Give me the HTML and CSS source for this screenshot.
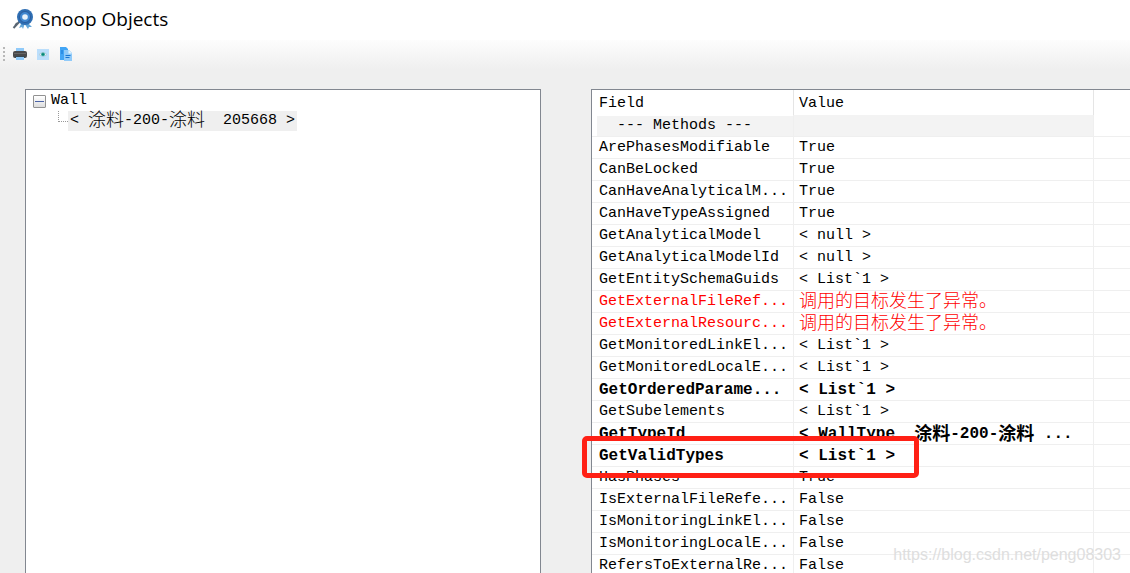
FILE: index.html
```html
<!DOCTYPE html>
<html lang="zh-CN">
<head>
<meta charset="utf-8">
<title>Snoop Objects</title>
<link rel="stylesheet" href="styles.css">
</head>
<body>
<header class="titlebar">
  <svg class="logo" viewBox="0 0 22 22" aria-hidden="true">
    <path d="M8 13 1.500 20M5 15l-2 3" stroke="#596673" stroke-width="2" fill="none"/>
    <path d="m10 14-3 6 3-1 1 2 2-6zm5 0 5 5-3 0-1 2-4-6z" fill="#62a5d8"/>
    <circle cx="13" cy="9" r="8" fill="#2e6eb3"/>
    <circle cx="13" cy="9" r="5.500" fill="#3f87d0" stroke="#2a5c9c"/>
    <circle cx="13" cy="9" r="2.800" fill="#e6f1fa"/>
  </svg>
  <h1 class="title">Snoop Objects</h1>
</header>
<nav class="toolbar" aria-label="Tools">
  <span class="grip"></span>
  <button class="tool" type="button" aria-label="Print">
    <svg viewBox="0 0 14 14"><path d="M3 1h8v4H3z" fill="#90caf9"/><rect y="4" width="14" height="7" rx="2" fill="#4a4a4a"/><path d="M1 6h12v1H1z" fill="#666"/><path d="M3 9h8v4H3z" fill="#90caf9"/><path d="M2 9h10v1H2z" fill="#37474f"/></svg>
  </button>
  <button class="tool" type="button" aria-label="Preview">
    <svg viewBox="0 0 14 14"><path d="M1 2h12v11H1z" fill="#bbdefb"/><path d="M3 7.500Q7 3.500 11 7.500 7 11 3 7.500" fill="#eceff1" stroke="#a2bdc9" stroke-width=".6"/><circle cx="7" cy="7.300" r="1.900" fill="#26a69a"/><circle cx="7" cy="7.300" r=".8" fill="#00695c"/></svg>
  </button>
  <button class="tool" type="button" aria-label="Copy">
    <svg viewBox="0 0 14 14"><path d="M1 0h6l2 2v11H1z" fill="#42a5f5"/><path d="M2 4h2M2 6h2" stroke="#1976d2"/><path d="M5 3h5l3 3v8H5z" fill="#90caf9"/><path d="M9.500 3 13 6.500H9.500z" fill="#e1f5fe"/><path d="M6.500 8.500h5M6.500 10.500h4" stroke="#1976d2"/></svg>
  </button>
</nav>
<main class="content">
  <section class="panel tree" aria-label="Objects">
    <div class="node">
      <button class="expander" type="button" aria-label="Collapse Wall"></button>
      <span>Wall</span>
    </div>
    <div class="child">
      <span class="branch"></span>
      <span class="selected">&lt; <span class="han">涂料</span>-200-<span class="han">涂料</span>  205668 &gt;</span>
    </div>
  </section>
  <section class="panel details" aria-label="Properties">
    <table class="grid">
      <colgroup><col class="col-field"><col class="col-value"><col></colgroup>
      <thead><tr><th>Field</th><th>Value</th><th></th></tr></thead>
      <tbody>
        <tr class="group"><td><span class="fill">  --- Methods ---</span></td><td></td><td></td></tr>
        <tr><td>ArePhasesModifiable</td><td>True</td><td></td></tr>
        <tr><td>CanBeLocked</td><td>True</td><td></td></tr>
        <tr><td>CanHaveAnalyticalM...</td><td>True</td><td></td></tr>
        <tr><td>CanHaveTypeAssigned</td><td>True</td><td></td></tr>
        <tr><td>GetAnalyticalModel</td><td>&lt; null &gt;</td><td></td></tr>
        <tr><td>GetAnalyticalModelId</td><td>&lt; null &gt;</td><td></td></tr>
        <tr><td>GetEntitySchemaGuids</td><td>&lt; List`1 &gt;</td><td></td></tr>
        <tr class="error"><td>GetExternalFileRef...</td><td><span class="han">调用的目标发生了异常。</span></td><td></td></tr>
        <tr class="error"><td>GetExternalResourc...</td><td><span class="han">调用的目标发生了异常。</span></td><td></td></tr>
        <tr><td>GetMonitoredLinkEl...</td><td>&lt; List`1 &gt;</td><td></td></tr>
        <tr><td>GetMonitoredLocalE...</td><td>&lt; List`1 &gt;</td><td></td></tr>
        <tr class="strong"><td>GetOrderedParame...</td><td>&lt; List`1 &gt;</td><td></td></tr>
        <tr><td>GetSubelements</td><td>&lt; List`1 &gt;</td><td></td></tr>
        <tr class="strong"><td>GetTypeId</td><td>&lt; WallType  <span class="han">涂料</span>-200-<span class="han">涂料</span> ...</td><td></td></tr>
        <tr class="strong"><td>GetValidTypes</td><td>&lt; List`1 &gt;</td><td></td></tr>
        <tr><td>HasPhases</td><td>True</td><td></td></tr>
        <tr><td>IsExternalFileRefe...</td><td>False</td><td></td></tr>
        <tr><td>IsMonitoringLinkEl...</td><td>False</td><td></td></tr>
        <tr><td>IsMonitoringLocalE...</td><td>False</td><td></td></tr>
        <tr><td>RefersToExternalRe...</td><td>False</td><td></td></tr>
      </tbody>
    </table>
    <div class="highlight"></div>
  </section>
</main>
<div class="watermark">https://blog.csdn.net/peng08303</div>
</body>
</html>
```
FILE: styles.css
```css
* { box-sizing: border-box; }

body {
  position: relative;
  display: flex;
  flex-direction: column;
  height: 100vh;
  margin: 0;
  overflow: hidden;
  background: #efefef;
  color: #000;
  font: 15px/20px "Liberation Mono", "Noto Sans CJK SC", monospace;
}

.titlebar {
  display: flex;
  flex: none;
  align-items: center;
  gap: 6px;
  height: 40px;
  padding: 0 0 2px 12px;
  background: #fff;
}

.logo { width: 22px; height: 22px; }

.title {
  margin: 0;
  font: 400 19px/24px "Open Sans", "Noto Sans", sans-serif;
}

.toolbar {
  display: flex;
  flex: none;
  align-items: center;
  gap: 9px;
  height: 29px;
  padding: 0 0 2px 3px;
  background: linear-gradient(#fdfdfd, #efefef);
}

.grip {
  width: 2px;
  height: 14px;
  margin-right: -1px;
  background: repeating-linear-gradient(#b8b8b8 0 2px, transparent 2px 4px);
}

.tool {
  width: 14px;
  height: 14px;
  padding: 0;
  border: 0;
  background: none;
}

.tool svg { display: block; width: 14px; height: 14px; }

.content {
  display: grid;
  flex: 1;
  grid-template-columns: 516fr 539fr;
  gap: 50px;
  min-height: 0;
  padding: 20px 0 0 25px;
}

.panel {
  min-width: 0;
  min-height: 0;
  border: 1px solid #828790;
  border-bottom: 0;
  background: #fff;
}

.tree { padding: 1px 7px; }

.node, .child { display: flex; align-items: center; height: 20px; }
.node { gap: 5px; }

.expander {
  display: grid;
  place-items: center;
  width: 13px;
  height: 13px;
  padding: 0;
  border: 1px solid #919191;
  border-radius: 1px;
  background: linear-gradient(#fff, #ddd);
}

.expander::before {
  width: 9px;
  height: 1px;
  background: #4b63a7;
  content: "";
}

.child { padding-left: 25px; }

.branch {
  align-self: flex-start;
  width: 10px;
  height: 11px;
  border: dotted #999;
  border-width: 0 0 1px 1px;
}

.selected {
  padding: 0 2px;
  background: #efefef;
  line-height: 20px;
  white-space: pre;
}

.han {
  font-family: "Noto Sans CJK SC", sans-serif;
  font-size: 18px;
  line-height: 1px;
  font-weight: 300;
  vertical-align: -2px;
}

.details {
  position: relative;
  border-right: 0;
}

.grid {
  width: 100%;
  table-layout: fixed;
  border-spacing: 0;
  white-space: pre;
}

.col-field { width: 202px; }
.col-value { width: 300px; }

.grid th {
  height: 25px;
  padding: 2px 0 0 7px;
  border-right: 1px solid #e5e5e5;
  font-weight: 400;
  text-align: left;
}

.grid td {
  height: 22px;
  padding: 1px 0 0 7px;
  border-right: 1px solid #efefef;
  border-bottom: 1px solid #efefef;
  line-height: 20px;
}

.grid th:nth-child(2), .grid td:nth-child(2) { padding-left: 5px; }
.grid th:last-child, .grid td:last-child { border-right: 0; }

.grid .group td { background: #f3f3f3; }
.grid .group td:first-child { padding-left: 5px; background: #fff; }
.grid .group td:last-child { background: #fff; }
.fill { display: block; padding-left: 2px; background: #f3f3f3; }

.error { color: #f00; }
.strong { font-size: 16px; font-weight: 700; }
.strong .han { font-weight: 700; }

.highlight {
  position: absolute;
  top: 346px;
  left: -10px;
  width: 337px;
  height: 42px;
  border: 5px solid #ff2015;
  border-radius: 5px;
}

.watermark {
  position: absolute;
  right: 9px;
  bottom: 8px;
  color: #dedede;
  font: 16px/20px "Liberation Sans", sans-serif;
}
```
